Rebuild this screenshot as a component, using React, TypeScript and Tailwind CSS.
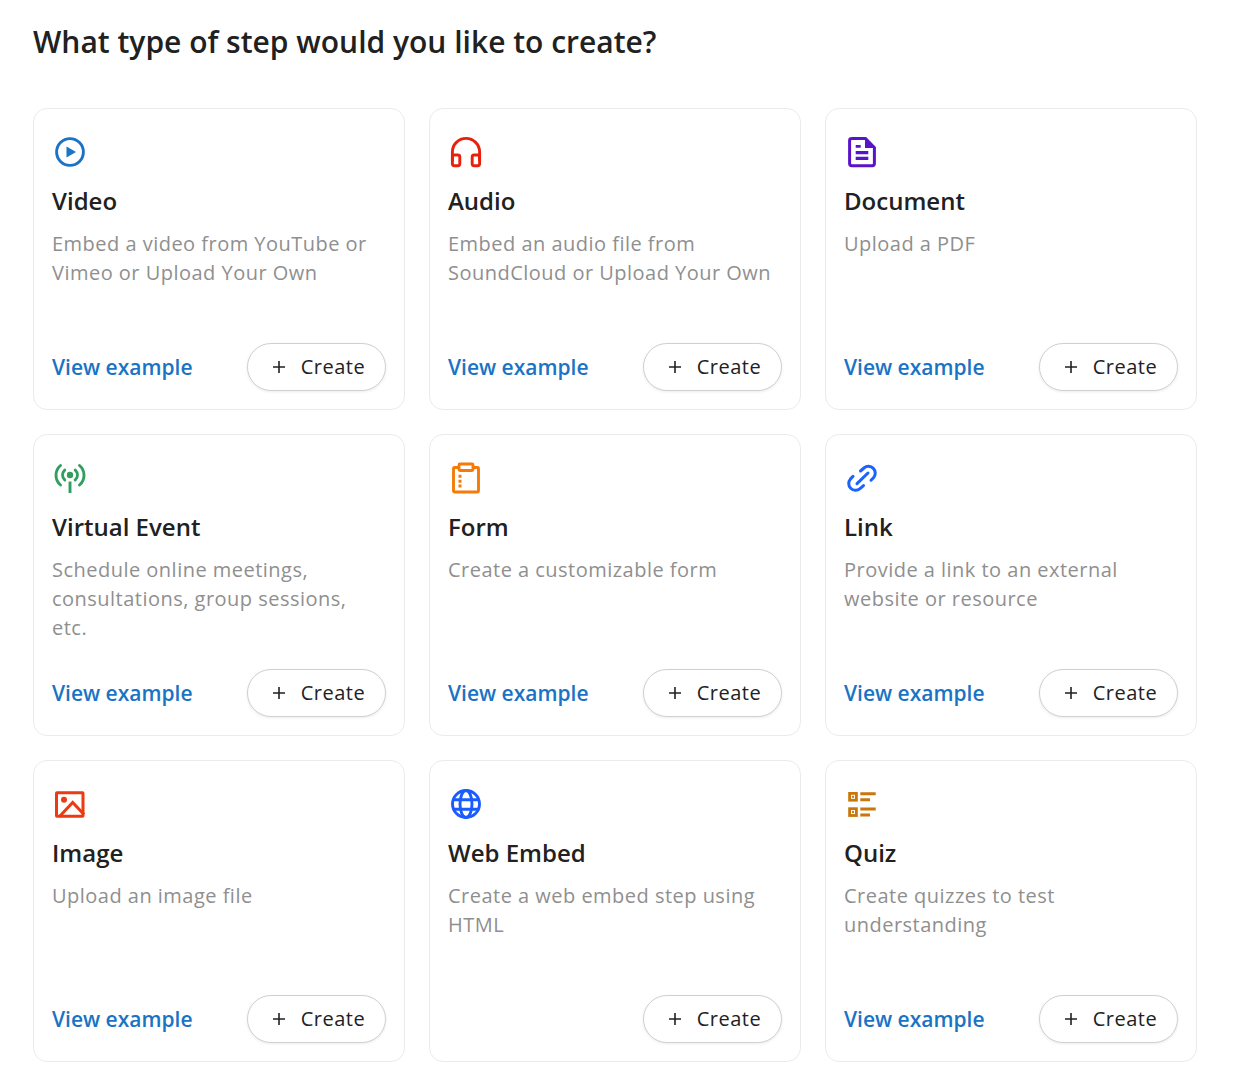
import React from 'react';

const iconClass = 'h-9 w-9';

function VideoIcon() {
  return (
    <svg viewBox="0 0 36 36" fill="none" className={iconClass}>
      <circle cx="18" cy="18" r="13.4" stroke="#1a73c4" strokeWidth="2.9" />
      <path d="M14.5 12.5 L24 18 L14.5 23.5 Z" fill="#1a73c4" />
    </svg>
  );
}

function AudioIcon() {
  return (
    <svg viewBox="0 0 36 36" fill="none" stroke="#e8210c" strokeWidth="2.9" className={iconClass}>
      <path d="M4.4 27 V18 a13.6 13.6 0 0 1 27.2 0 V27" />
      <rect x="4.4" y="21" width="7.4" height="10.8" rx="2" />
      <rect x="24.2" y="21" width="7.4" height="10.8" rx="2" />
    </svg>
  );
}

function DocumentIcon() {
  return (
    <svg viewBox="0 0 36 36" fill="none" className={iconClass}>
      <path d="M7.5 4.6 H21.5 L30.4 13.5 V29.5 a2.2 2.2 0 0 1 -2.2 2.2 H7.8 a2.2 2.2 0 0 1 -2.2 -2.2 V6.5 a2 2 0 0 1 2 -1.9 Z" stroke="#5a14c8" strokeWidth="3" />
      <path d="M21 4.5 L31 14 H21 Z" fill="#5a14c8" />
      <path d="M11.7 11 H16.7 V13.8 H11.7 Z M11.7 17 H24.3 V20.2 H11.7 Z M11.7 22.8 H24.3 V26 H11.7 Z" fill="#5a14c8" />
    </svg>
  );
}

function EventIcon() {
  return (
    <svg viewBox="0 0 36 36" fill="none" stroke="#2f9e5f" strokeWidth="2.9" strokeLinecap="round" className={iconClass}>
      <path d="M8.5 5.5 C2.5 10.5 2.5 20 8.5 25" />
      <path d="M27.5 5.5 C33.5 10.5 33.5 20 27.5 25" />
      <path d="M12.8 10 C9.8 13 9.8 17 12.8 20" />
      <path d="M23.2 10 C26.2 13 26.2 17 23.2 20" />
      <circle cx="18" cy="15" r="3.2" fill="#2f9e5f" stroke="none" />
      <path d="M18 21.5 V33" strokeLinecap="butt" />
    </svg>
  );
}

function FormIcon() {
  return (
    <svg viewBox="0 0 36 36" fill="none" stroke="#f47b0a" strokeWidth="2.9" className={iconClass}>
      <rect x="5.5" y="7.5" width="25" height="24.5" rx="1" />
      <rect x="11" y="4" width="14" height="6.5" rx="1" fill="#ffffff" />
      <path d="M10.5 16.2 H13.5 M10.5 21.2 H13.5 M10.5 26 H13.5" strokeWidth="3" />
    </svg>
  );
}

function LinkIcon() {
  return (
    <svg viewBox="0 0 36 36" fill="none" stroke="#1a63ff" strokeWidth="3" strokeLinecap="round" className={iconClass}>
      <path d="M16.5 11 L20 8 A6.8 6.8 0 0 1 29.5 17.7 L27 20.2" />
      <path d="M19.5 25.6 L16 28.6 A6.8 6.8 0 0 1 6.5 18.9 L9 16.4" />
      <path d="M13 23.6 L24 13" />
    </svg>
  );
}

function ImageIcon() {
  return (
    <svg viewBox="0 0 36 36" fill="none" stroke="#ec3a12" strokeWidth="3" className={iconClass}>
      <rect x="4.5" y="6.8" width="26.5" height="23.5" rx="0.5" />
      <path d="M7.5 30.5 L20.7 16.5 L32 28.5" />
      <circle cx="12" cy="13.7" r="3" fill="#ec3a12" stroke="none" />
    </svg>
  );
}

function GlobeIcon() {
  return (
    <svg viewBox="0 0 36 36" fill="none" stroke="#1a5cff" strokeWidth="2.9" className={iconClass}>
      <circle cx="18" cy="18" r="13.5" />
      <ellipse cx="18" cy="18" rx="6" ry="13.5" />
      <path d="M5.5 13.7 H30.5 M5.5 23.3 H30.5" />
    </svg>
  );
}

function QuizIcon() {
  return (
    <svg viewBox="0 0 36 36" fill="none" stroke="#c8770c" className={iconClass}>
      <rect x="5.6" y="7.4" width="6.8" height="6.8" strokeWidth="2.8" />
      <rect x="5.6" y="22.7" width="6.8" height="6.8" strokeWidth="2.8" />
      <path d="M16.3 7.7 H31.7 M16.3 13.7 H26 M16.3 23 H31.7 M16.3 29 H26" strokeWidth="3" />
      <rect x="8" y="9.8" width="2" height="2" fill="#c8770c" stroke="none" />
      <rect x="8" y="25.1" width="2" height="2" fill="#c8770c" stroke="none" />
    </svg>
  );
}

const steps = [
  { title: 'Video', text: 'Embed a video from YouTube or Vimeo or Upload Your Own', icon: <VideoIcon />, example: true },
  { title: 'Audio', text: 'Embed an audio file from SoundCloud or Upload Your Own', icon: <AudioIcon />, example: true },
  { title: 'Document', text: 'Upload a PDF', icon: <DocumentIcon />, example: true },
  { title: 'Virtual Event', text: 'Schedule online meetings, consultations, group sessions, etc.', icon: <EventIcon />, example: true },
  { title: 'Form', text: 'Create a customizable form', icon: <FormIcon />, example: true },
  { title: 'Link', text: 'Provide a link to an external website or resource', icon: <LinkIcon />, example: true },
  { title: 'Image', text: 'Upload an image file', icon: <ImageIcon />, example: true },
  { title: 'Web Embed', text: 'Create a web embed step using HTML', icon: <GlobeIcon />, example: false },
  { title: 'Quiz', text: 'Create quizzes to test understanding', icon: <QuizIcon />, example: true },
];

export default function App() {
  return (
    <div className="min-h-[1091px] bg-white pl-[33px] pt-[21px] font-['Open_Sans',sans-serif]">
      <h1 className="text-[30px] leading-[42px] font-semibold text-[#212121]">What type of step would you like to create?</h1>
      <div className="mt-[45px] grid w-[1164px] grid-cols-3 gap-6">
        {steps.map((step) => (
          <div key={step.title} className="flex h-[302px] flex-col rounded-[14px] border border-[#ebebeb] bg-white px-[18px] pt-[25px] pb-[18px]">
            <div>{step.icon}</div>
            <h2 className="mt-[13px] text-[24px] leading-[36px] font-semibold text-[#212121]">{step.title}</h2>
            <p className="mt-[10px] text-[20px] leading-[29px] tracking-[0.48px] text-[#8f8f8f]">{step.text}</p>
            <div className="mt-auto flex items-center justify-between">
              {step.example ? <a className="text-[21px] leading-[28px] font-semibold text-[#1a73c4]">View example</a> : <span />}
              <button className="flex h-12 w-[139px] items-center justify-center gap-[15px] rounded-full border border-[#d0d0d0] bg-white pl-1 text-[20px] tracking-[0.5px] text-[#212121] shadow-[0_1px_3px_rgba(0,0,0,0.08)]">
                <svg viewBox="0 0 14 14" className="h-[14px] w-[14px]" stroke="#212121" strokeWidth="1.6">
                  <path d="M7 1 V13 M1 7 H13" />
                </svg>
                Create
              </button>
            </div>
          </div>
        ))}
      </div>
    </div>
  );
}
